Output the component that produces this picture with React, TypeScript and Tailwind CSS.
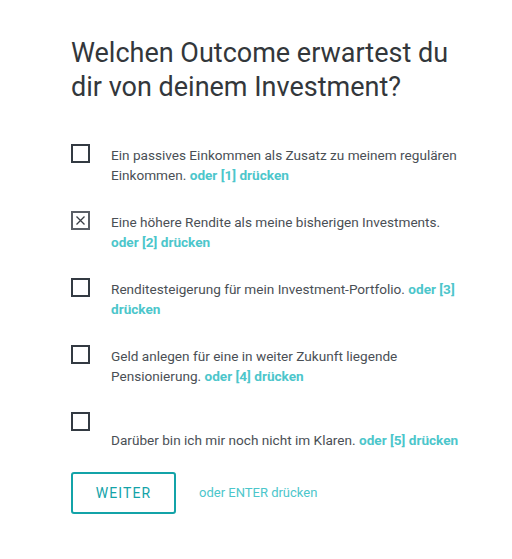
import React, { useState } from 'react';

const options = [
  { key: 1, text: 'Ein passives Einkommen als Zusatz zu meinem regulären Einkommen.' },
  { key: 2, text: 'Eine höhere Rendite als meine bisherigen Investments.' },
  { key: 3, text: 'Renditesteigerung für mein Investment-Portfolio.' },
  { key: 4, text: 'Geld anlegen für eine in weiter Zukunft liegende Pensionierung.' },
  { key: 5, text: 'Darüber bin ich mir noch nicht im Klaren.', offset: true },
];

export default function App() {
  const [selected, setSelected] = useState<number>(2);

  return (
    <div className="min-h-[559px] w-[512px] bg-white pl-[71px] pr-[30px] pt-[36px] font-['Roboto',sans-serif]">
      {/* Question */}
      <h1 className="w-[390px] text-[27px] leading-[34px] font-normal text-[#33373b]">
        Welchen Outcome erwartest du dir von deinem Investment?
      </h1>

      {/* Options */}
      <ul className="mt-[40px] flex flex-col gap-[26px]">
        {options.map(({ key, text, offset }) => {
          const active = selected === key;
          return (
            <li key={key} className="flex cursor-pointer items-start gap-[21px]" onClick={() => setSelected(key)}>
              <span
                className={`flex h-[19px] w-[19px] flex-shrink-0 items-center justify-center border-2 ${
                  active ? 'border-[#5a5f66]' : 'border-[#333a42]'
                }`}
              >
                {active && (
                  <svg width="11" height="11" viewBox="0 0 11 11" fill="none">
                    <path d="M1.5 1.5L9.5 9.5M9.5 1.5L1.5 9.5" stroke="#3b4047" strokeWidth="1.3" />
                  </svg>
                )}
              </span>
              <p
                className={`w-[356px] flex-shrink-0 text-[13.6px] leading-[20px] text-[#4a4f55] ${
                  offset ? 'mt-[18px]' : 'mt-[1px]'
                }`}
              >
                {text}{' '}
                <span className="font-bold text-[#4cc6cb]">
                  oder [{key}] drücken
                </span>
              </p>
            </li>
          );
        })}
      </ul>

      {/* Footer */}
      <div className="mt-[22px] flex items-center gap-[23px]">
        <button className="h-[42px] w-[105px] rounded-[3px] border-2 border-[#13a3a8] text-[14px] tracking-[0.08em] text-[#13a3a8]">
          WEITER
        </button>
        <span className="text-[13px] text-[#4cc6cb]">oder ENTER drücken</span>
      </div>
    </div>
  );
}
